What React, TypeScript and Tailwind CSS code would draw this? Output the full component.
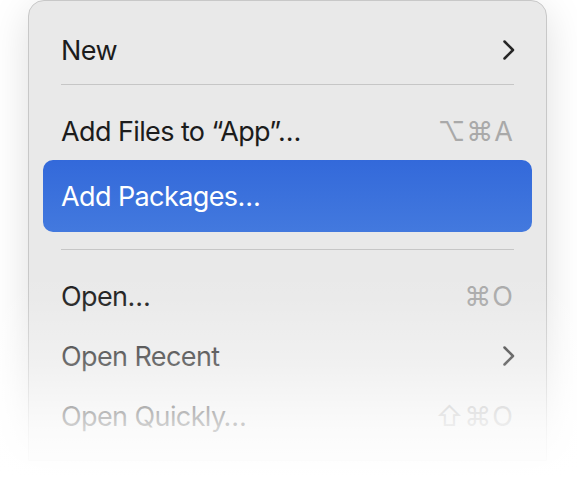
type Item = {
  label: string;
  shortcut?: string;
  submenu?: boolean;
  active?: boolean;
};

function Chevron() {
  return (
    <svg width="14" height="22" viewBox="0 0 14 22" fill="none" className="-mr-[2px] text-[#262626]">
      <path d="M2.5 2.5 L11 11 L2.5 19.5" stroke="currentColor" strokeWidth="2.5" strokeLinecap="round" strokeLinejoin="round" />
    </svg>
  );
}

function Row({ item, className }: { item: Item; className: string }) {
  return (
    <div
      className={`flex items-center justify-between px-[18px] ${className} ${
        item.active ? "rounded-[10px] bg-gradient-to-b from-[#3369da] to-[#4379de] text-white" : "text-[#1c1c1c]"
      }`}
    >
      <span>{item.label}</span>
      {item.submenu && <Chevron />}
      {item.shortcut && (
        <span className="text-[#a9a9a9] tracking-[1px] font-['Inter','DejaVu_Sans',sans-serif]">{item.shortcut}</span>
      )}
    </div>
  );
}

function Separator({ className }: { className: string }) {
  return <div className={`mx-[18px] h-px bg-[#c6c6c6] ${className}`} />;
}

export default function App() {
  return (
    <div className="relative h-[483px] w-[577px] overflow-hidden bg-white font-['Inter',sans-serif] text-[27px] leading-none tracking-[-0.6px]">
      <div className="ml-[28px] w-[519px] rounded-t-[16px] border border-[#c8c8c8] bg-[#e9e9e9] px-[14px] pt-[16px] pb-[14px] shadow-[0_10px_40px_rgba(0,0,0,0.13)]">
        <Row item={{ label: "New", submenu: true }} className="h-[66px]" />
        <Separator className="mt-[1px] mb-[17px]" />
        <Row item={{ label: "Add Files to \u201cApp\u201d\u2026", shortcut: "\u2325\u2318A" }} className="h-[58px]" />
        <Row item={{ label: "Add Packages\u2026", active: true }} className="h-[72px]" />
        <Separator className="mt-[17px] mb-[16px]" />
        <Row item={{ label: "Open\u2026", shortcut: "\u2318O" }} className="h-[60px]" />
        <Row item={{ label: "Open Recent", submenu: true }} className="h-[60px]" />
        <Row item={{ label: "Open Quickly\u2026", shortcut: "\u21e7\u2318O" }} className="h-[60px]" />
      </div>
      <div className="pointer-events-none absolute inset-x-0 top-[270px] bottom-0 bg-[linear-gradient(to_bottom,rgba(255,255,255,0)_0%,rgba(255,255,255,0.05)_13%,rgba(255,255,255,0.36)_44%,rgba(255,255,255,0.8)_74%,rgba(255,255,255,1)_97%)]" />
    </div>
  );
}
